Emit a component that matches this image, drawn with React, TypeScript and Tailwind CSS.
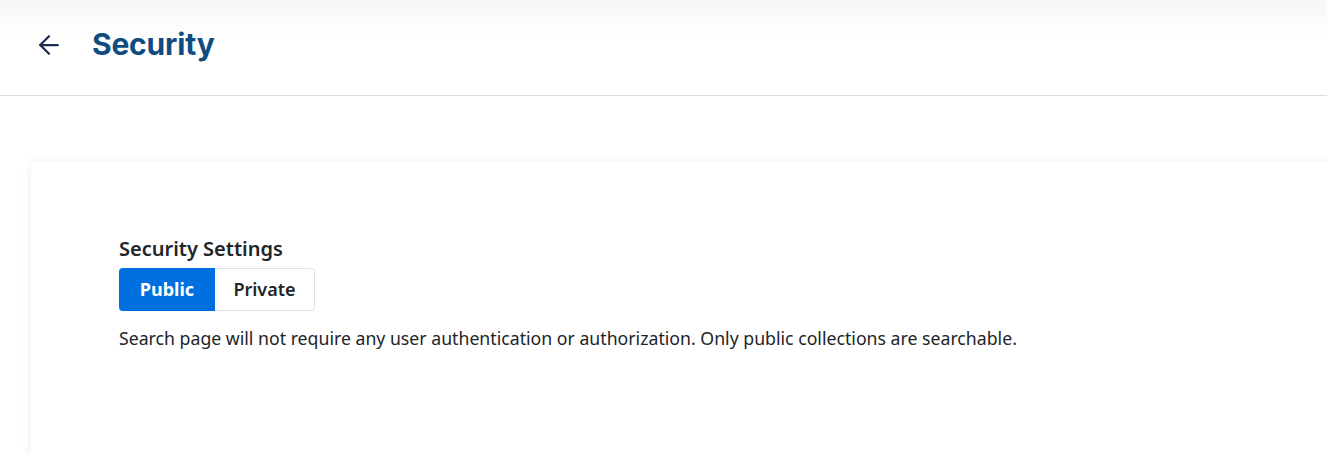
import { ArrowLeft } from "lucide-react";

export default function App() {
  return (
    <div className="h-[453px] overflow-hidden bg-white font-['Noto_Sans',sans-serif] text-[#212529]">
      <header className="h-[96px] border-b border-[#d9dde2] bg-gradient-to-b from-[#f6f6f6] to-white to-[40%] flex items-center px-[34px] pb-[6px]">
        <button className="text-[#1c2d52]">
          <ArrowLeft className="w-[30px] h-[30px]" strokeWidth={1.8} />
        </button>
        <h1 className="ml-[28px] font-['Inter',sans-serif] text-[30px] font-bold text-[#0f4c81] tracking-[-0.2px]">
          Security
        </h1>
      </header>

      <main className="pt-[66px] pl-[31px]">
        <section className="bg-white rounded-tl-[4px] shadow-[0_0_12px_rgba(0,0,0,0.07)] pl-[88px] pt-[73px] pb-[200px]">
          <h2 className="text-[20px] font-semibold leading-[28px]">Security Settings</h2>
          <div className="mt-[5px] flex">
            <button className="h-[43px] w-[96px] rounded-l-[4px] bg-[#0070e0] text-white text-[18px] font-bold">
              Public
            </button>
            <button className="h-[43px] w-[100px] rounded-r-[4px] border border-[#dee2e6] border-l-0 bg-white text-[18px] font-semibold text-[#212529]">
              Private
            </button>
          </div>
          <p className="mt-[14px] text-[17.7px] leading-[26px] text-[#212529]">
            Search page will not require any user authentication or authorization. Only public collections are searchable.
          </p>
        </section>
      </main>
    </div>
  );
}
